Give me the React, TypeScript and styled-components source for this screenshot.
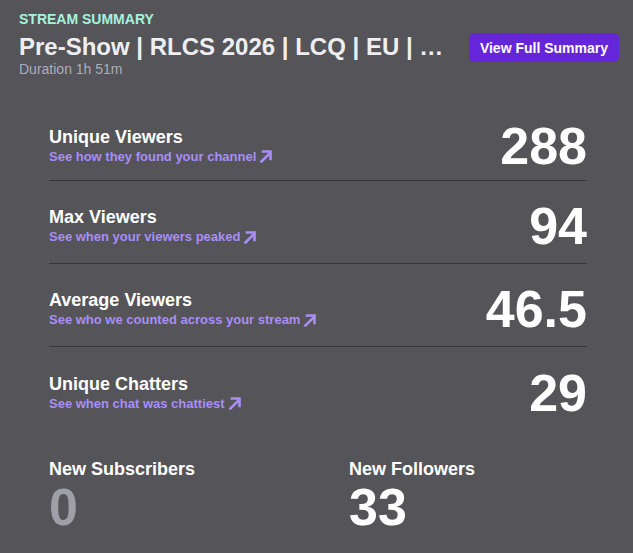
import styled, { createGlobalStyle } from 'styled-components';

const GlobalStyle = createGlobalStyle`
    html, body {
        margin: 0;
        padding: 0;
        background: #545459;
    }
    body {
        font-family: "Liberation Sans", Arial, sans-serif;
        color: #fff;
    }
    *, *::before, *::after {
        box-sizing: border-box;
    }
`;

type Metric = {
    label: string;
    link: string;
    value: string;
};

const metrics: Metric[] = [
    { label: 'Unique Viewers', link: 'See how they found your channel', value: '288' },
    { label: 'Max Viewers', link: 'See when your viewers peaked', value: '94' },
    { label: 'Average Viewers', link: 'See who we counted across your stream', value: '46.5' },
    { label: 'Unique Chatters', link: 'See when chat was chattiest', value: '29' },
];

// thick diagonal arrow next to each drill-down link
const LinkArrow = () => (
    <svg width="14" height="14" viewBox="0 0 14 14" fill="none">
        <path d="M2.5 12.5 L11 4" stroke="currentColor" strokeWidth="2.6" strokeLinecap="square" />
        <path d="M4 2.5 H11.5 V10" stroke="currentColor" strokeWidth="2.6" strokeLinecap="square" />
    </svg>
);

export default function App() {
    return (
        <>
            <GlobalStyle />
            <StyledPage>
                <StyledHeader>
                    <StyledHeading>
                        <StyledEyebrow>Stream Summary</StyledEyebrow>
                        <StyledTitle>Pre-Show | RLCS 2026 | LCQ | EU | …</StyledTitle>
                        <StyledDuration>Duration 1h 51m</StyledDuration>
                    </StyledHeading>
                    <StyledButton>View Full Summary</StyledButton>
                </StyledHeader>

                <StyledBody>
                    {metrics.map((m) => (
                        <StyledRow key={m.label}>
                            <div>
                                <StyledLabel>{m.label}</StyledLabel>
                                <StyledLink href="#">
                                    {m.link}
                                    <LinkArrow />
                                </StyledLink>
                            </div>
                            <StyledValue>{m.value}</StyledValue>
                        </StyledRow>
                    ))}

                    <StyledTotals>
                        <div>
                            <StyledLabel>New Subscribers</StyledLabel>
                            <StyledTotal muted>0</StyledTotal>
                        </div>
                        <div>
                            <StyledLabel>New Followers</StyledLabel>
                            <StyledTotal>33</StyledTotal>
                        </div>
                    </StyledTotals>
                </StyledBody>
            </StyledPage>
        </>
    );
}

const StyledPage = styled.div`
    width: 633px;
    height: 553px;
    overflow: hidden;
`;

const StyledHeader = styled.div`
    display: flex;
    justify-content: space-between;
    align-items: flex-start;
    padding: 11px 14px 0 19px;
`;

const StyledHeading = styled.div`
    display: flex;
    flex-direction: column;
    min-width: 0;
`;

const StyledEyebrow = styled.div`
    font-size: 14px;
    font-weight: 700;
    line-height: 17px;
    text-transform: uppercase;
    color: #a6f3d9;
`;

const StyledTitle = styled.h1`
    margin: 6px 0 0;
    max-width: 440px;
    font-size: 24px;
    font-weight: 700;
    line-height: 26px;
    color: #efeff1;
    white-space: nowrap;
    overflow: hidden;
    text-overflow: ellipsis;
`;

const StyledDuration = styled.div`
    margin-top: 1px;
    font-size: 14px;
    line-height: 16px;
    color: #adadb8;
`;

const StyledButton = styled.button`
    margin-top: 22px;
    height: 29px;
    padding: 0 11px;
    border: none;
    border-radius: 5px;
    background: #6525d9;
    color: #fff;
    font-family: inherit;
    font-size: 14px;
    font-weight: 700;
    cursor: pointer;
`;

const StyledBody = styled.div`
    margin: 34px 46px 0 49px;
`;

const StyledRow = styled.div`
    display: flex;
    justify-content: space-between;
    align-items: center;
    height: 83px;
    padding-top: 8px;
    border-bottom: 1px solid #36363a;
    &:first-child {
        height: 70px;
        padding-top: 0;
    }
    &:nth-child(4) {
        border-bottom: none;
    }
`;

const StyledLabel = styled.div`
    font-size: 18px;
    font-weight: 700;
    line-height: 20px;
    color: #fff;
`;

const StyledLink = styled.a`
    display: inline-flex;
    align-items: center;
    gap: 3px;
    margin-top: 2px;
    font-size: 13px;
    font-weight: 700;
    line-height: 15px;
    color: #a98ef7;
    text-decoration: none;
`;

const StyledValue = styled.div`
    font-size: 52px;
    font-weight: 700;
    line-height: 52px;
    color: #fff;
`;

const StyledTotals = styled.div`
    display: grid;
    grid-template-columns: 300px 1fr;
    padding-top: 29px;
`;

const StyledTotal = styled.div<{ muted?: boolean }>`
    margin-top: 2px;
    font-size: 52px;
    font-weight: 700;
    line-height: 52px;
    color: ${(p) => (p.muted ? '#9f9fa8' : '#fff')};
`;
